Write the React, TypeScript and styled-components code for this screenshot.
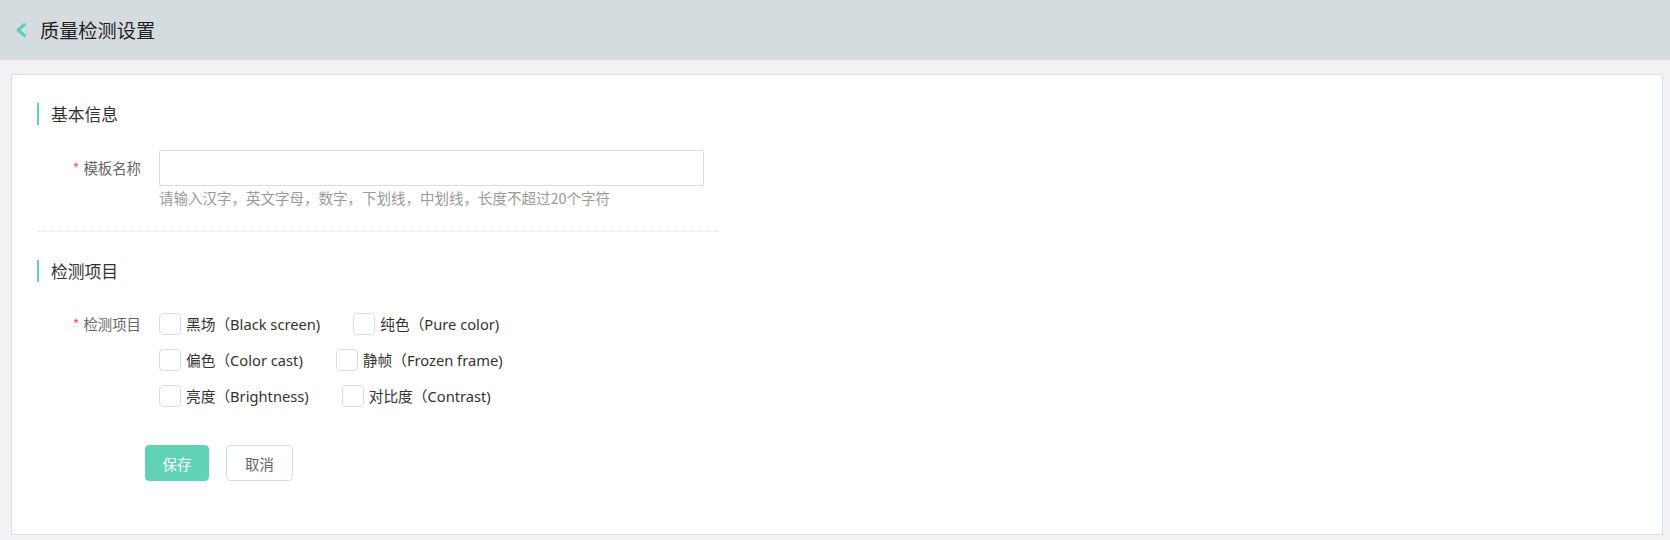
import React from "react";
import styled, { createGlobalStyle } from "styled-components";

const GlobalStyle = createGlobalStyle`
  html, body {
    margin: 0;
    padding: 0;
    background: #f2f2f4;
    font-family: "Noto Sans CJK SC", "Noto Sans", sans-serif;
  }
  * { box-sizing: border-box; }
`;

const Page = styled.div`
  width: 1670px;
  min-height: 540px;
  background: #f2f2f4;
`;

const Header = styled.header`
  height: 60px;
  background: #d5dce0;
  display: flex;
  align-items: center;
  padding-left: 14px;
`;

const BackIcon = styled.svg`
  width: 14px;
  height: 16px;
  margin-right: 12px;
  flex: none;
`;

const Title = styled.h1`
  margin: 0;
  font-size: 19.2px;
  font-weight: 400;
  line-height: 26px;
  color: #1f1f1f;
`;

const Card = styled.main`
  margin: 14px 7px 6px 11px;
  background: #ffffff;
  border: 1px solid #d9e1e8;
  padding: 28px 0 53px 25px;
`;

const SectionTitle = styled.h2<{ $top?: number }>`
  margin: ${(p) => p.$top ?? 0}px 0 0 0;
  height: 22px;
  line-height: 22px;
  border-left: 2px solid #5fd3b5;
  padding-left: 12px;
  font-size: 16.8px;
  font-weight: 400;
  color: #333333;
`;

const FormRow = styled.div<{ $top: number }>`
  display: flex;
  align-items: flex-start;
  margin-top: ${(p) => p.$top}px;
`;

const Label = styled.div`
  width: 122px;
  flex: none;
  padding-right: 18px;
  text-align: right;
  font-size: 14.4px;
  line-height: 36px;
  color: #666666;
  white-space: nowrap;
`;

const Star = styled.span`
  color: #f5606a;
  margin-right: 4px;
`;

const Field = styled.div`
  display: flex;
  flex-direction: column;
`;

const Input = styled.input`
  width: 545px;
  height: 36px;
  border: 1px solid #d5dee6;
  border-radius: 2px;
  outline: none;
  padding: 0 10px;
  font-family: inherit;
  font-size: 14px;
  background: #fff;
`;

const Hint = styled.div`
  margin-top: 2px;
  font-size: 14.5px;
  line-height: 20px;
  color: #9a9a9a;
  white-space: nowrap;
`;

const Divider = styled.hr`
  width: 681px;
  margin: 23px 0 0 0;
  border: none;
  border-top: 1px dotted #dcdcdc;
  height: 0;
`;

const CheckGroup = styled.div`
  display: flex;
  flex-direction: column;
`;

const CheckRow = styled.div`
  display: flex;
  align-items: center;
  height: 36px;
`;

const CheckItem = styled.label`
  display: inline-flex;
  align-items: center;
  margin-right: 33px;
  font-family: "Noto Sans", "Noto Sans CJK SC", sans-serif;
  font-size: 14.7px;
  line-height: 20px;
  color: #333333;
  white-space: nowrap;
  cursor: pointer;
`;

const Box = styled.span`
  width: 22px;
  height: 22px;
  border: 1px solid #d5dee6;
  border-radius: 4px;
  background: #fff;
  margin-right: 5px;
  flex: none;
`;

const Actions = styled.div`
  display: flex;
  gap: 17px;
  margin-top: 31px;
  padding-left: 108px;
`;

const Button = styled.button<{ $primary?: boolean }>`
  height: 36px;
  min-width: ${(p) => (p.$primary ? 64 : 67)}px;
  padding: 0 16px;
  border-radius: 4px;
  font-family: inherit;
  font-size: 14.4px;
  cursor: pointer;
  border: 1px solid ${(p) => (p.$primary ? "#62d2b4" : "#d5dee6")};
  background: ${(p) => (p.$primary ? "#62d2b4" : "#ffffff")};
  color: ${(p) => (p.$primary ? "#ffffff" : "#666666")};
`;

const rows: string[][] = [
  ["黑场（Black screen)", "纯色（Pure color)"],
  ["偏色（Color cast)", "静帧（Frozen frame)"],
  ["亮度（Brightness)", "对比度（Contrast)"],
];

export default function App() {
  return (
    <Page>
      <GlobalStyle />
      <Header>
        <BackIcon viewBox="0 0 14 16" fill="none">
          <path d="M10.5 2.5 L4 8 L10.5 13.5" stroke="#5ccfb0" strokeWidth="3" strokeLinecap="round" strokeLinejoin="round" />
        </BackIcon>
        <Title>质量检测设置</Title>
      </Header>
      <Card>
        <SectionTitle>基本信息</SectionTitle>
        <FormRow $top={25}>
          <Label>
            <Star>*</Star>模板名称
          </Label>
          <Field>
            <Input />
            <Hint>请输入汉字，英文字母，数字，下划线，中划线，长度不超过20个字符</Hint>
          </Field>
        </FormRow>
        <Divider />
        <SectionTitle $top={28}>检测项目</SectionTitle>
        <FormRow $top={24}>
          <Label>
            <Star>*</Star>检测项目
          </Label>
          <CheckGroup>
            {rows.map((r, i) => (
              <CheckRow key={i}>
                {r.map((t) => (
                  <CheckItem key={t}>
                    <Box />
                    {t}
                  </CheckItem>
                ))}
              </CheckRow>
            ))}
          </CheckGroup>
        </FormRow>
        <Actions>
          <Button $primary>保存</Button>
          <Button>取消</Button>
        </Actions>
      </Card>
    </Page>
  );
}
